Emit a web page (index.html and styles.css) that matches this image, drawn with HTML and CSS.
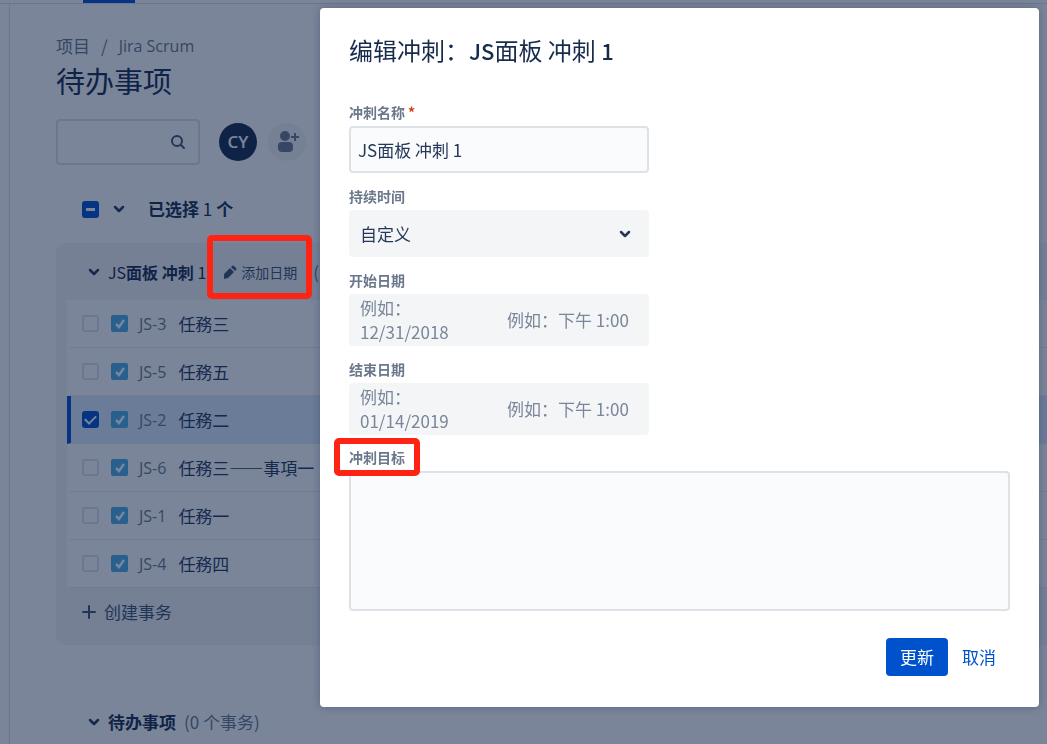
FILE: index.html
```
<!DOCTYPE html>
<html lang="zh-CN">
  <head>
    <meta charset="UTF-8" />
    <meta name="viewport" content="width=device-width, initial-scale=1.0" />
    <title>待办事项 - Jira Scrum</title>
    <link rel="stylesheet" href="styles.css" />
  </head>
  <body>
    <header class="topbar"><div class="active-tab"></div></header>

    <div class="layout">
      <aside class="sidebar"></aside>

      <main class="content">
        <nav class="breadcrumbs">
          <a href="#">项目</a><span>/</span><a href="#" class="latin">Jira Scrum</a>
        </nav>
        <h1>待办事项</h1>

        <div class="filters">
          <div class="search">
            <input type="text" aria-label="搜索" />
            <svg width="16" height="16" viewBox="0 0 16 16" fill="none" stroke="currentColor" stroke-width="2" stroke-linecap="round">
              <circle cx="7" cy="7" r="5" />
              <path d="M11 11l3 3" />
            </svg>
          </div>
          <button class="avatar">CY</button>
          <button class="add-people" aria-label="添加人员">
            <svg width="24" height="24" viewBox="0 0 24 24" fill="currentColor">
              <circle cx="10" cy="6" r="5" />
              <rect x="3" y="12" width="15" height="10" rx="4" />
              <path d="M19 3h2v3h3v2h-3v3h-2V8h-3V6h3z" />
            </svg>
          </button>
        </div>

        <div class="selection">
          <input type="checkbox" class="checkbox mixed" aria-label="全选" />
          <button class="toggle" aria-label="展开">
            <svg class="chevron" viewBox="0 0 12 12"><path d="M2 4l4 4 4-4" /></svg>
          </button>
          <strong>已选择 <span>1</span> 个</strong>
        </div>

        <section class="sprint">
          <div class="section-header">
            <button class="toggle" aria-label="折叠">
              <svg class="chevron" viewBox="0 0 12 12"><path d="M2 4l4 4 4-4" /></svg>
            </button>
            <h2><span>JS</span>面板 冲刺 <span>1</span></h2>
            <button class="add-dates">
              <svg width="14" height="14" viewBox="0 0 14 14" fill="currentColor">
                <path d="M1 9l6-6 4 4-6 6-4 1zM8 2l1-1q1-1 2 0l2 2q1 1 0 2l-1 1z" />
              </svg>
              添加日期
            </button>
            <span class="count">(</span>
          </div>

          <ul class="issues">
            <li>
              <input type="checkbox" class="checkbox" aria-label="JS-3" />
              <svg class="type" viewBox="0 0 17 17"><rect width="17" height="17" rx="2" /><path d="M5 9l3 3 5-7" /></svg>
              <a href="#" class="latin">JS-3</a><span>任務三</span>
            </li>
            <li>
              <input type="checkbox" class="checkbox" aria-label="JS-5" />
              <svg class="type" viewBox="0 0 17 17"><rect width="17" height="17" rx="2" /><path d="M5 9l3 3 5-7" /></svg>
              <a href="#" class="latin">JS-5</a><span>任務五</span>
            </li>
            <li class="selected">
              <input type="checkbox" class="checkbox" aria-label="JS-2" checked />
              <svg class="type" viewBox="0 0 17 17"><rect width="17" height="17" rx="2" /><path d="M5 9l3 3 5-7" /></svg>
              <a href="#" class="latin">JS-2</a><span>任務二</span>
            </li>
            <li>
              <input type="checkbox" class="checkbox" aria-label="JS-6" />
              <svg class="type" viewBox="0 0 17 17"><rect width="17" height="17" rx="2" /><path d="M5 9l3 3 5-7" /></svg>
              <a href="#" class="latin">JS-6</a><span>任務三——事項一</span>
            </li>
            <li>
              <input type="checkbox" class="checkbox" aria-label="JS-1" />
              <svg class="type" viewBox="0 0 17 17"><rect width="17" height="17" rx="2" /><path d="M5 9l3 3 5-7" /></svg>
              <a href="#" class="latin">JS-1</a><span>任務一</span>
            </li>
            <li>
              <input type="checkbox" class="checkbox" aria-label="JS-4" />
              <svg class="type" viewBox="0 0 17 17"><rect width="17" height="17" rx="2" /><path d="M5 9l3 3 5-7" /></svg>
              <a href="#" class="latin">JS-4</a><span>任務四</span>
            </li>
          </ul>

          <button class="create">
            <svg width="14" height="14" viewBox="0 0 14 14" stroke="currentColor" stroke-width="2" stroke-linecap="round">
              <path d="M7 1v12M1 7h12" />
            </svg>
            创建事务
          </button>
        </section>

        <section class="backlog">
          <div class="section-header">
            <button class="toggle" aria-label="折叠">
              <svg class="chevron" viewBox="0 0 12 12"><path d="M2 4l4 4 4-4" /></svg>
            </button>
            <h2>待办事项</h2>
            <span class="count">(0 个事务)</span>
          </div>
        </section>
      </main>
    </div>

    <div class="overlay">
      <form class="modal" role="dialog" aria-labelledby="modal-title">
        <h2 id="modal-title">编辑冲刺：<b>JS</b>面板 冲刺 <b>1</b></h2>

        <label for="name">冲刺名称<span class="required">*</span></label>
        <input type="text" id="name" class="text-field" value="JS面板 冲刺 1" />

        <label for="duration">持续时间</label>
        <div class="select-field">
          <select id="duration">
            <option>自定义</option>
          </select>
          <svg class="chevron" viewBox="0 0 12 12"><path d="M2 4l4 4 4-4" /></svg>
        </div>

        <label for="start">开始日期</label>
        <div class="date-field">
          <textarea id="start" rows="2" placeholder="例如： 12/31/2018"></textarea>
          <input type="text" aria-label="开始时间" placeholder="例如：下午 1:00" />
        </div>

        <label for="end">结束日期</label>
        <div class="date-field">
          <textarea id="end" rows="2" placeholder="例如： 01/14/2019"></textarea>
          <input type="text" aria-label="结束时间" placeholder="例如：下午 1:00" />
        </div>

        <label for="goal" class="goal-label">冲刺目标</label>
        <textarea id="goal" class="goal"></textarea>

        <div class="actions">
          <button type="submit" class="primary">更新</button>
          <button type="button" class="link">取消</button>
        </div>
      </form>
    </div>
  </body>
</html>
```

FILE: styles.css
```
* {
  box-sizing: border-box;
}

body {
  margin: 0;
  height: 100vh;
  display: flex;
  flex-direction: column;
  overflow: hidden;
  background-color: #ffffff;
  color: #172b4d;
  font-family: "Noto Sans CJK SC", "Open Sans", sans-serif;
  font-size: 17px;
  line-height: 24px;
}

button,
input,
select,
textarea {
  font: inherit;
  color: inherit;
  margin: 0;
}

button {
  padding: 0;
  border: none;
  background: none;
  cursor: pointer;
}

a {
  color: #6b778c;
  text-decoration: none;
}

h1,
h2 {
  margin: 0;
}

.latin {
  font-family: "Open Sans", sans-serif;
  font-size: 16px;
}

.topbar {
  height: 4px;
  flex-shrink: 0;
  padding-left: 83px;
  border-bottom: 1px solid #dfe1e6;
}

.active-tab {
  width: 52px;
  height: 3px;
  background-color: #0052cc;
}

.layout {
  flex: 1;
  display: flex;
}

.sidebar {
  width: 10px;
  border-right: 1px solid #dfe1e6;
}

.content {
  flex: 1;
  padding: 30px 0 0 46px;
}

.breadcrumbs {
  display: flex;
  gap: 11px;
  color: #6b778c;
}

h1 {
  margin-top: 4px;
  font-size: 29px;
  font-weight: 400;
  line-height: 36px;
}

.filters {
  display: flex;
  align-items: center;
  margin-top: 21px;
}

.search {
  display: flex;
  align-items: center;
  width: 144px;
  height: 46px;
  margin-right: 19px;
  padding: 0 12px;
  border: 2px solid #dfe1e6;
  border-radius: 4px;
  color: #42526e;
}

.search input {
  flex: 1;
  min-width: 0;
  border: none;
  outline: none;
  background: none;
}

.avatar {
  width: 38px;
  height: 38px;
  border-radius: 50%;
  background-color: #172b4d;
  color: #ffffff;
  font-family: "Open Sans", sans-serif;
  font-weight: 600;
}

.add-people {
  display: flex;
  align-items: center;
  justify-content: center;
  width: 38px;
  height: 38px;
  margin-left: 11px;
  border-radius: 50%;
  background-color: #f4f5f7;
  color: #6b778c;
}

.selection {
  display: flex;
  align-items: center;
  gap: 14px;
  margin-top: 32px;
  padding-left: 26px;
}

.selection strong {
  margin-left: 9px;
}

.selection span,
.section-header h2 span {
  font-weight: 400;
}

.checkbox {
  appearance: none;
  display: flex;
  align-items: center;
  justify-content: center;
  width: 17px;
  height: 17px;
  border: 2px solid #dfe1e6;
  border-radius: 3px;
}

.checkbox:checked,
.checkbox.mixed {
  border-color: #0052cc;
  background-color: #0052cc;
}

.checkbox:checked::after {
  content: "";
  width: 9px;
  height: 5px;
  margin-bottom: 3px;
  border-left: 2px solid #ffffff;
  border-bottom: 2px solid #ffffff;
  transform: rotate(-45deg);
}

.checkbox.mixed::after {
  content: "";
  width: 9px;
  height: 3px;
  background-color: #ffffff;
}

.toggle {
  display: flex;
}

.chevron {
  width: 12px;
  height: 12px;
  fill: none;
  stroke: #253858;
  stroke-width: 2.5;
  stroke-linecap: round;
  stroke-linejoin: round;
}

.sprint {
  margin-top: 22px;
  padding: 0 0 20px 11px;
  border-radius: 10px 0 0 10px;
  background-color: #f4f5f7;
}

.section-header {
  display: flex;
  align-items: center;
  height: 57px;
  padding-left: 21px;
  white-space: nowrap;
}

.section-header h2 {
  margin-left: 8px;
  font-size: 17px;
}

.sprint h2 {
  font-size: 16px;
}

.count {
  margin-left: 8px;
  color: #6b778c;
}

.add-dates {
  position: relative;
  display: flex;
  align-items: center;
  gap: 4px;
  margin-left: 17px;
  font-size: 14px;
  line-height: 20px;
  color: #42526e;
}

.add-dates + .count {
  margin-left: 16px;
}

/* red highlight frames */
.add-dates::after,
.goal-label::after {
  content: "";
  position: absolute;
  border: 6px solid #ff2314;
  border-radius: 5px;
}

/* stays above the overlay */
.add-dates::after {
  inset: -27px -15px -17px -16px;
  z-index: 20;
}

.goal-label::after {
  inset: -9px -15px -9px -15px;
}

.issues {
  margin: 0;
  padding: 0;
  list-style: none;
  background-color: #ffffff;
}

.issues li {
  display: flex;
  align-items: center;
  height: 48px;
  padding-left: 11px;
  border-left: 4px solid transparent;
  border-bottom: 1px solid #ebecf0;
  white-space: nowrap;
}

.issues .selected {
  border-left-color: #0052cc;
  background-color: #deebff;
}

.type {
  width: 17px;
  height: 17px;
  margin: 0 11px 0 12px;
  fill: #4bade8;
}

.type path {
  fill: none;
  stroke: #ffffff;
  stroke-width: 2.5;
}

.issues span {
  margin-left: 12px;
  color: #253858;
}

.create {
  display: flex;
  align-items: center;
  gap: 8px;
  margin: 12px 0 1px 15px;
  color: #42526e;
}

.backlog {
  margin-top: 48px;
  padding-left: 11px;
}

.overlay {
  position: fixed;
  inset: 0;
  z-index: 10;
  display: flex;
  justify-content: flex-end;
  align-items: flex-start;
  padding: 8px;
  background-color: rgba(9, 30, 66, 0.54);
}

.modal {
  display: flex;
  flex-direction: column;
  align-items: flex-start;
  width: 100%;
  max-width: 719px;
  padding: 24px 29px 31px;
  border-radius: 4px;
  background-color: #ffffff;
  box-shadow: 0 0 8px rgba(9, 30, 66, 0.3);
}

.modal h2 {
  margin-bottom: 21px;
  font-size: 24px;
  font-weight: 400;
  line-height: 36px;
}

.modal b {
  font-size: 22px;
  font-weight: 500;
}

.modal label {
  margin: 13px 0 4px;
  color: #6b778c;
  font-size: 14px;
  font-weight: 700;
  line-height: 20px;
}

.required {
  margin-left: 3px;
  color: #de350b;
}

.text-field,
.goal {
  border: 2px solid #dfe1e6;
  border-radius: 4px;
  background-color: #fafbfc;
}

.text-field {
  width: 300px;
  height: 47px;
  padding: 0 7px;
  color: #253858;
}

.select-field,
.date-field {
  display: flex;
  align-items: center;
  width: 300px;
  border-radius: 4px;
  background-color: #f4f5f7;
  color: #253858;
}

.select-field {
  height: 47px;
}

.select-field select {
  flex: 1;
  height: 100%;
  margin-right: -30px;
  padding: 0 11px;
  border: none;
  appearance: none;
  background: none;
}

.select-field .chevron {
  margin: 0 18px 0 auto;
  pointer-events: none;
}

.date-field textarea,
.date-field input {
  border: none;
  background: none;
  resize: none;
}

.date-field textarea {
  display: block;
  width: 130px;
  height: 52px;
  padding: 2px 11px;
  overflow: hidden;
}

.date-field input {
  width: 152px;
  margin-left: 18px;
  padding: 0 10px;
}

.date-field ::placeholder {
  color: #7a869a;
  opacity: 1;
}

.modal .goal-label {
  position: relative;
  margin-top: 12px;
}

.goal {
  width: 100%;
  height: 140px;
  resize: none;
}

.actions {
  display: flex;
  gap: 14px;
  align-self: flex-end;
  margin: 27px 14px 0 0;
}

.primary {
  height: 38px;
  padding: 0 14px;
  border-radius: 4px;
  background-color: #0052cc;
  color: #ffffff;
}

.link {
  color: #0052cc;
}
```
